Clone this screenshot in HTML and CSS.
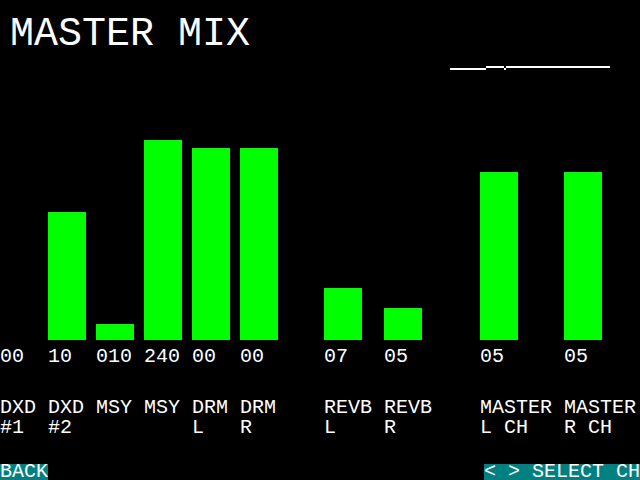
FILE: index.html
```html
<!DOCTYPE html>
<html lang="en">

<head>
    <meta charset="UTF-8">
    <title>Master Mix</title>
    <link rel="stylesheet" href="styles.css">
</head>

<body>

    <div class="screen">
        <header class="header">
            <h1 class="title">MASTER MIX</h1>
            <svg class="level" width="160" height="4" viewBox="0 0 160 4">
                <rect x="0" y="2" width="36" height="2" fill="#fff"/>
                <rect x="36" y="0" width="18" height="2" fill="#fff"/>
                <rect x="54" y="2" width="2" height="2" fill="#fff"/>
                <rect x="56" y="0" width="104" height="2" fill="#fff"/>
            </svg>
        </header>

        <!-- one column per channel -->
        <div class="mixer">
            <div class="channel">
                <div class="bar-area"><div class="bar" style="height: 0px"></div></div>
                <div class="value">00</div>
                <div class="name">DXD<br>#1</div>
            </div>
            <div class="channel">
                <div class="bar-area"><div class="bar" style="height: 128px"></div></div>
                <div class="value">10</div>
                <div class="name">DXD<br>#2</div>
            </div>
            <div class="channel">
                <div class="bar-area"><div class="bar" style="height: 16px"></div></div>
                <div class="value">010</div>
                <div class="name">MSY</div>
            </div>
            <div class="channel">
                <div class="bar-area"><div class="bar" style="height: 200px"></div></div>
                <div class="value">240</div>
                <div class="name">MSY</div>
            </div>
            <div class="channel">
                <div class="bar-area"><div class="bar" style="height: 192px"></div></div>
                <div class="value">00</div>
                <div class="name">DRM<br>L</div>
            </div>
            <div class="channel">
                <div class="bar-area"><div class="bar" style="height: 192px"></div></div>
                <div class="value">00</div>
                <div class="name">DRM<br>R</div>
            </div>
            <div class="channel">
                <div class="bar-area"><div class="bar" style="height: 52px"></div></div>
                <div class="value">07</div>
                <div class="name">REVB<br>L</div>
            </div>
            <div class="channel">
                <div class="bar-area"><div class="bar" style="height: 32px"></div></div>
                <div class="value">05</div>
                <div class="name">REVB<br>R</div>
            </div>
            <div class="channel">
                <div class="bar-area"><div class="bar" style="height: 168px"></div></div>
                <div class="value">05</div>
                <div class="name">MASTER<br>L CH</div>
            </div>
            <div class="channel">
                <div class="bar-area"><div class="bar" style="height: 168px"></div></div>
                <div class="value">05</div>
                <div class="name">MASTER<br>R CH</div>
            </div>
        </div>

        <footer class="footer">
            <span class="key">BACK</span>
            <span class="key">&lt; &gt; SELECT CH</span>
        </footer>
    </div>

</body>

</html>
```

FILE: styles.css
```css
body {
    margin: 0;
    padding: 0;
    background: #000;
    color: #fff;
    font-family: 'Liberation Mono', 'DejaVu Sans Mono', monospace;
    font-size: 20px;
    line-height: 20px;
    overflow: hidden;
}

.screen {
    width: 640px;
    height: 480px;
    display: flex;
    flex-direction: column;
}

.header {
    display: flex;
    flex-direction: column;
    padding-top: 15px;
    height: 56px;
}

.title {
    margin: 0 0 0 10px;
    font-size: 40px;
    line-height: 40px;
    font-weight: normal;
    letter-spacing: 0;
}

.level {
    display: block;
    align-self: flex-end;
    margin: 11px 30px 0 0;
}

/* channel columns */
.mixer {
    display: grid;
    grid-template-columns: repeat(5, 48px) 84px 60px 96px 84px 1fr;
}

.bar-area {
    height: 269px;
    display: flex;
    align-items: flex-end;
}

.bar {
    width: 38px;
    background: #00ff00;
}

.value {
    margin-top: 7px;
    height: 20px;
    white-space: nowrap;
}

.name {
    margin-top: 31px;
    height: 40px;
    white-space: nowrap;
}

.footer {
    margin-top: auto;
    display: flex;
    justify-content: space-between;
    align-items: flex-end;
}

.key {
    background: #008080;
    height: 16px;
    line-height: 16px;
    white-space: nowrap;
}
```
